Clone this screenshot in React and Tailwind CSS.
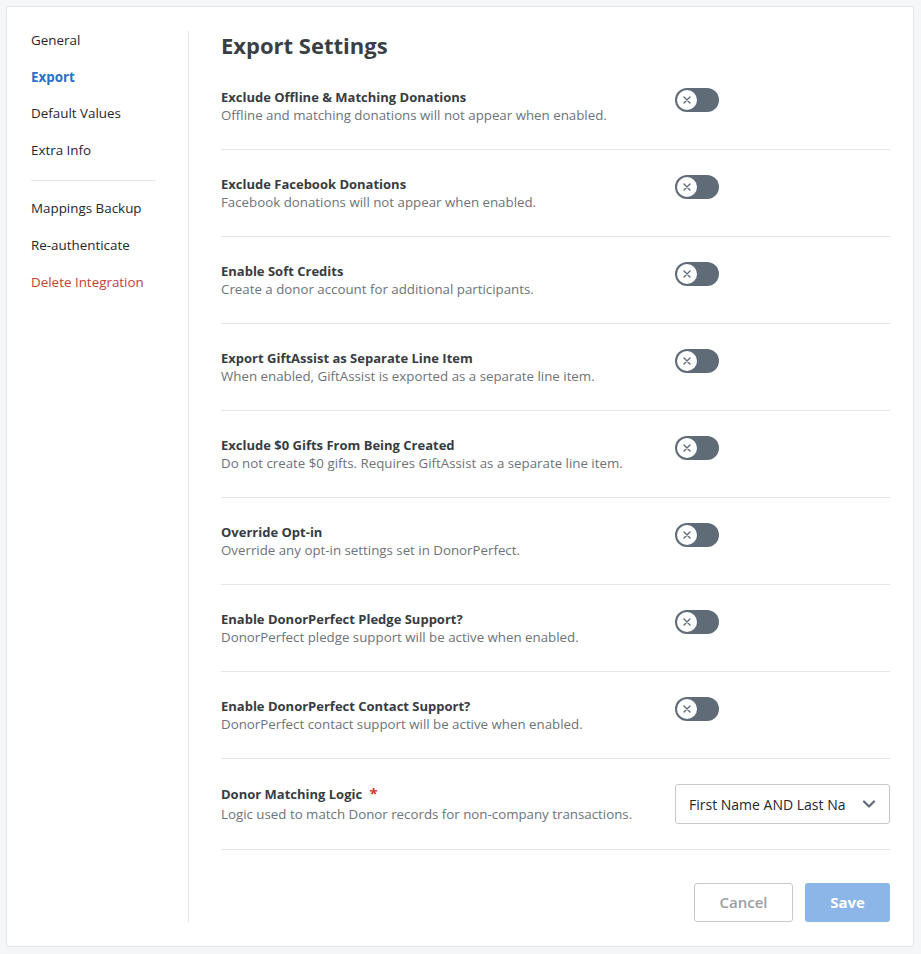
import React from "react";

const rows = [
  ["Exclude Offline & Matching Donations", "Offline and matching donations will not appear when enabled."],
  ["Exclude Facebook Donations", "Facebook donations will not appear when enabled."],
  ["Enable Soft Credits", "Create a donor account for additional participants."],
  ["Export GiftAssist as Separate Line Item", "When enabled, GiftAssist is exported as a separate line item."],
  ["Exclude $0 Gifts From Being Created", "Do not create $0 gifts. Requires GiftAssist as a separate line item."],
  ["Override Opt-in", "Override any opt-in settings set in DonorPerfect."],
  ["Enable DonorPerfect Pledge Support?", "DonorPerfect pledge support will be active when enabled."],
  ["Enable DonorPerfect Contact Support?", "DonorPerfect contact support will be active when enabled."],
];

function Toggle() {
  return (
    <div className="w-[44px] h-[24px] rounded-full bg-[#5f6b77] flex items-center pl-[2px]">
      <div className="w-[20px] h-[20px] rounded-full bg-white flex items-center justify-center">
        <svg width="8" height="8" viewBox="0 0 8 8">
          <path d="M1 1 L7 7 M7 1 L1 7" stroke="#5f6b77" strokeWidth="1.4" strokeLinecap="round" />
        </svg>
      </div>
    </div>
  );
}

export default function App() {
  return (
    <div
      className="bg-[#f5f6f8] min-h-[954px] pt-[6px] pl-[6px] pr-[7px] pb-[7px]"
      style={{ fontFamily: '"Open Sans", "Liberation Sans", sans-serif' }}
    >
      <div className="bg-white border border-[#e4e6e9] rounded-[3px] h-[941px] flex">
        <div className="w-[182px] shrink-0 mt-[24px] mb-[24px] border-r border-[#e4e6e9] pl-[24px]">
          <nav className="flex flex-col text-[13.4px] leading-[18px] text-[#24282c]">
            <a className="h-[18px]">General</a>
            <a className="h-[18px] mt-[19px] text-[#2b6fc6] font-bold">Export</a>
            <a className="h-[18px] mt-[18px]">Default Values</a>
            <a className="h-[18px] mt-[19px]">Extra Info</a>
            <div className="w-[125px] h-px bg-[#e4e6e9] mt-[21px]" />
            <a className="h-[18px] mt-[18px]">Mappings Backup</a>
            <a className="h-[18px] mt-[19px]">Re-authenticate</a>
            <a className="h-[18px] mt-[19px] text-[#c2413a]">Delete Integration</a>
          </nav>
        </div>
        <div className="flex-1 pl-[32px] pr-[23px] pt-[23px]">
          <h1 className="text-[22px] leading-[30px] font-bold text-[#3a3f44] h-[33px]">Export Settings</h1>
          {rows.map(([t, d]) => (
            <div key={t} className="flex py-[25px] border-b border-[#e4e6e9]">
              <div className="flex-1">
                <div className="text-[13px] leading-[18px] font-bold text-[#373c41]">{t}</div>
                <div className="text-[13.3px] leading-[18px] text-[#6d7379]">{d}</div>
              </div>
              <div className="w-[215px] shrink-0">
                <Toggle />
              </div>
            </div>
          ))}
          <div className="flex py-[25px] border-b border-[#e4e6e9]">
            <div className="flex-1">
              <div className="text-[13px] leading-[18px] font-bold text-[#373c41]">
                Donor Matching Logic <span className="text-[#d6332a] ml-[4px] text-[15px]">*</span>
              </div>
              <div className="text-[13.3px] leading-[18px] mt-[2px] text-[#6d7379]">
                Logic used to match Donor records for non-company transactions.
              </div>
            </div>
            <div className="w-[215px] shrink-0">
              <div className="h-[40px] border border-[#c5c9ce] rounded-[3px] flex items-center pl-[13px] pr-[13px]">
                <div className="flex-1 overflow-hidden whitespace-nowrap text-[14px] text-[#24282c]">
                  First Name AND Last Name
                </div>
                <svg width="14" height="14" viewBox="0 0 14 14" className="ml-[16px] shrink-0">
                  <path d="M2 4.5 L7 9.5 L12 4.5" fill="none" stroke="#5f6b77" strokeWidth="2.2" strokeLinecap="round" strokeLinejoin="round" />
                </svg>
              </div>
            </div>
          </div>
          <div className="flex justify-end gap-[12px] mt-[33px]">
            <button className="w-[99px] h-[39px] border border-[#c5c9ce] rounded-[3px] text-[15px] text-[#9aa0a6] font-semibold bg-white">
              Cancel
            </button>
            <button className="w-[85px] h-[39px] rounded-[3px] text-[15px] text-white font-bold bg-[#8cb5e8]">
              Save
            </button>
          </div>
        </div>
      </div>
    </div>
  );
}
